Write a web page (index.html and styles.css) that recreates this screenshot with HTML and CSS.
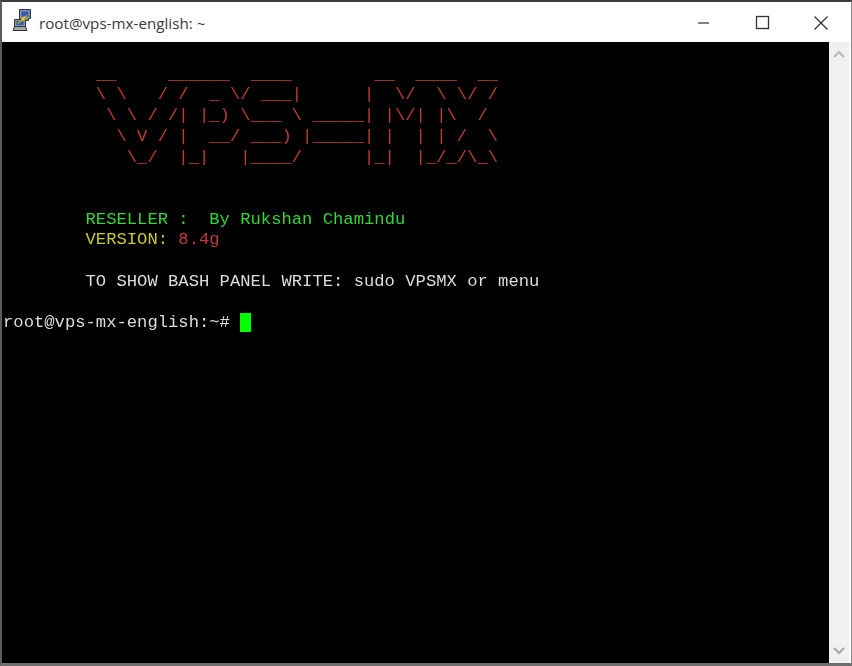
FILE: index.html
```html
<!DOCTYPE html>
<html lang="en">
<head>
<meta charset="utf-8">
<title>root@vps-mx-english: ~</title>
<link rel="stylesheet" href="styles.css">
</head>
<body>
<div class="window">
  <header class="titlebar">
    <svg class="app-icon" width="22" height="22" viewBox="0 0 22 22">
      <path d="M7.500.5h11v9h-2v2h-7v-2h-2z" fill="#8b93a6" stroke="#33343c"/>
      <rect x="9.500" y="2.500" width="7" height="5" fill="#2f58c4"/>
      <path d="M2.500 10.500h11v7h-11z" fill="#8b93a6" stroke="#33343c"/>
      <rect x="4.500" y="12" width="7" height="4" fill="#2f58c4"/>
      <path d="M2.500 17.500h11l1.500 4H1z" fill="#a6a6a6" stroke="#33343c"/>
      <path d="M5 14.500l5-4-1.500-.5 7-4.500-3 4 2 .5-6.500 3 .5 1z" fill="#f6e21a" stroke="#8e8212" stroke-width=".5"/>
    </svg>
    <span class="title">root@vps-mx-english: ~</span>
    <div class="controls">
      <svg class="control" width="46" height="40" viewBox="0 0 46 40"><path d="M18 21h11" stroke="#333" stroke-width="1.200"/></svg>
      <svg class="control" width="46" height="40" viewBox="0 0 46 40"><rect x="17.500" y="14.500" width="12" height="12" fill="none" stroke="#333" stroke-width="1.300"/></svg>
      <svg class="control" width="46" height="40" viewBox="0 0 46 40"><path d="M16.500 14.500l13 13M29.500 14.500l-13 13" stroke="#333" stroke-width="1.300"/></svg>
    </div>
  </header>
  <div class="client">
<pre class="terminal">

<span class="art">         __     ______  ____        __  ____  __</span>
<span class="art">         \ \   / /  _ \/ ___|      |  \/  \ \/ /</span>
<span class="art">          \ \ / /| |_) \___ \ _____| |\/| |\  /</span>
<span class="art">           \ V / |  __/ ___) |_____| |  | | /  \</span>
<span class="art">            \_/  |_|   |____/      |_|  |_/_/\_\</span>


        <span class="green">RESELLER :  By Rukshan Chamindu</span>
        <span class="yellow">VERSION:</span> <span class="red">8.4g</span>

        TO SHOW BASH PANEL WRITE: sudo VPSMX or menu

root@vps-mx-english:~# <span class="cursor"> </span></pre>
    <div class="scrollbar">
      <svg width="20" height="16" viewBox="0 0 20 16"><path d="M5 10l5-5 5 5" fill="none" stroke="#b8b8b8" stroke-width="2.200"/></svg>
      <svg width="20" height="16" viewBox="0 0 20 16"><path d="M5 6l5 5 5-5" fill="none" stroke="#a8a8b0" stroke-width="2.200"/></svg>
    </div>
  </div>
</div>
</body>
</html>
```
FILE: styles.css
```css
html, body {
  margin: 0;
  padding: 0;
  background: #ffffff;
}

.window {
  width: 852px;
  height: 666px;
  box-sizing: border-box;
  display: flex;
  flex-direction: column;
  border-top: 2px solid #3c3c3c;
  border-left: 2px solid #5c5c5c;
  border-right: 1px solid #8c8c8c;
  border-bottom: 3px solid #6e6e6e;
  overflow: hidden;
  background: #ffffff;
}

.titlebar {
  height: 40px;
  flex: none;
  display: flex;
  align-items: center;
  background: #ffffff;
}

.app-icon {
  margin-left: 10px;
  margin-bottom: 4px;
  flex: none;
}

.title {
  margin-left: 5px;
  margin-top: 1px;
  font-family: "Open Sans", "Noto Sans", sans-serif;
  font-size: 15.200px;
  color: #3a3a3a;
  white-space: nowrap;
}

.controls {
  margin-left: auto;
  margin-right: 7px;
  display: flex;
  gap: 13px;
}

.controls .control {
  display: block;
}

.client {
  flex: 1;
  min-height: 0;
  display: flex;
  padding-right: 2px;
}

.terminal {
  flex: 1;
  margin: 0;
  padding: 2px 0 0 1px;
  background: #000000;
  color: #dcdcdc;
  font-family: "Liberation Mono", "Courier New", monospace;
  font-size: 17.200px;
  line-height: 20.700px;
  white-space: pre;
  overflow: hidden;
  filter: blur(0.3px);
}

.art {
  color: #c23b30;
}

.green {
  color: #34d634;
}

.yellow {
  color: #c9c92f;
}

.red {
  color: #c43a3a;
}

.cursor {
  background: #00ff00;
}

.scrollbar {
  flex: none;
  width: 20px;
  display: flex;
  flex-direction: column;
  justify-content: space-between;
  padding: 5px 0;
  box-sizing: border-box;
  background: #f0f0f0;
}

.scrollbar svg {
  display: block;
}
```
